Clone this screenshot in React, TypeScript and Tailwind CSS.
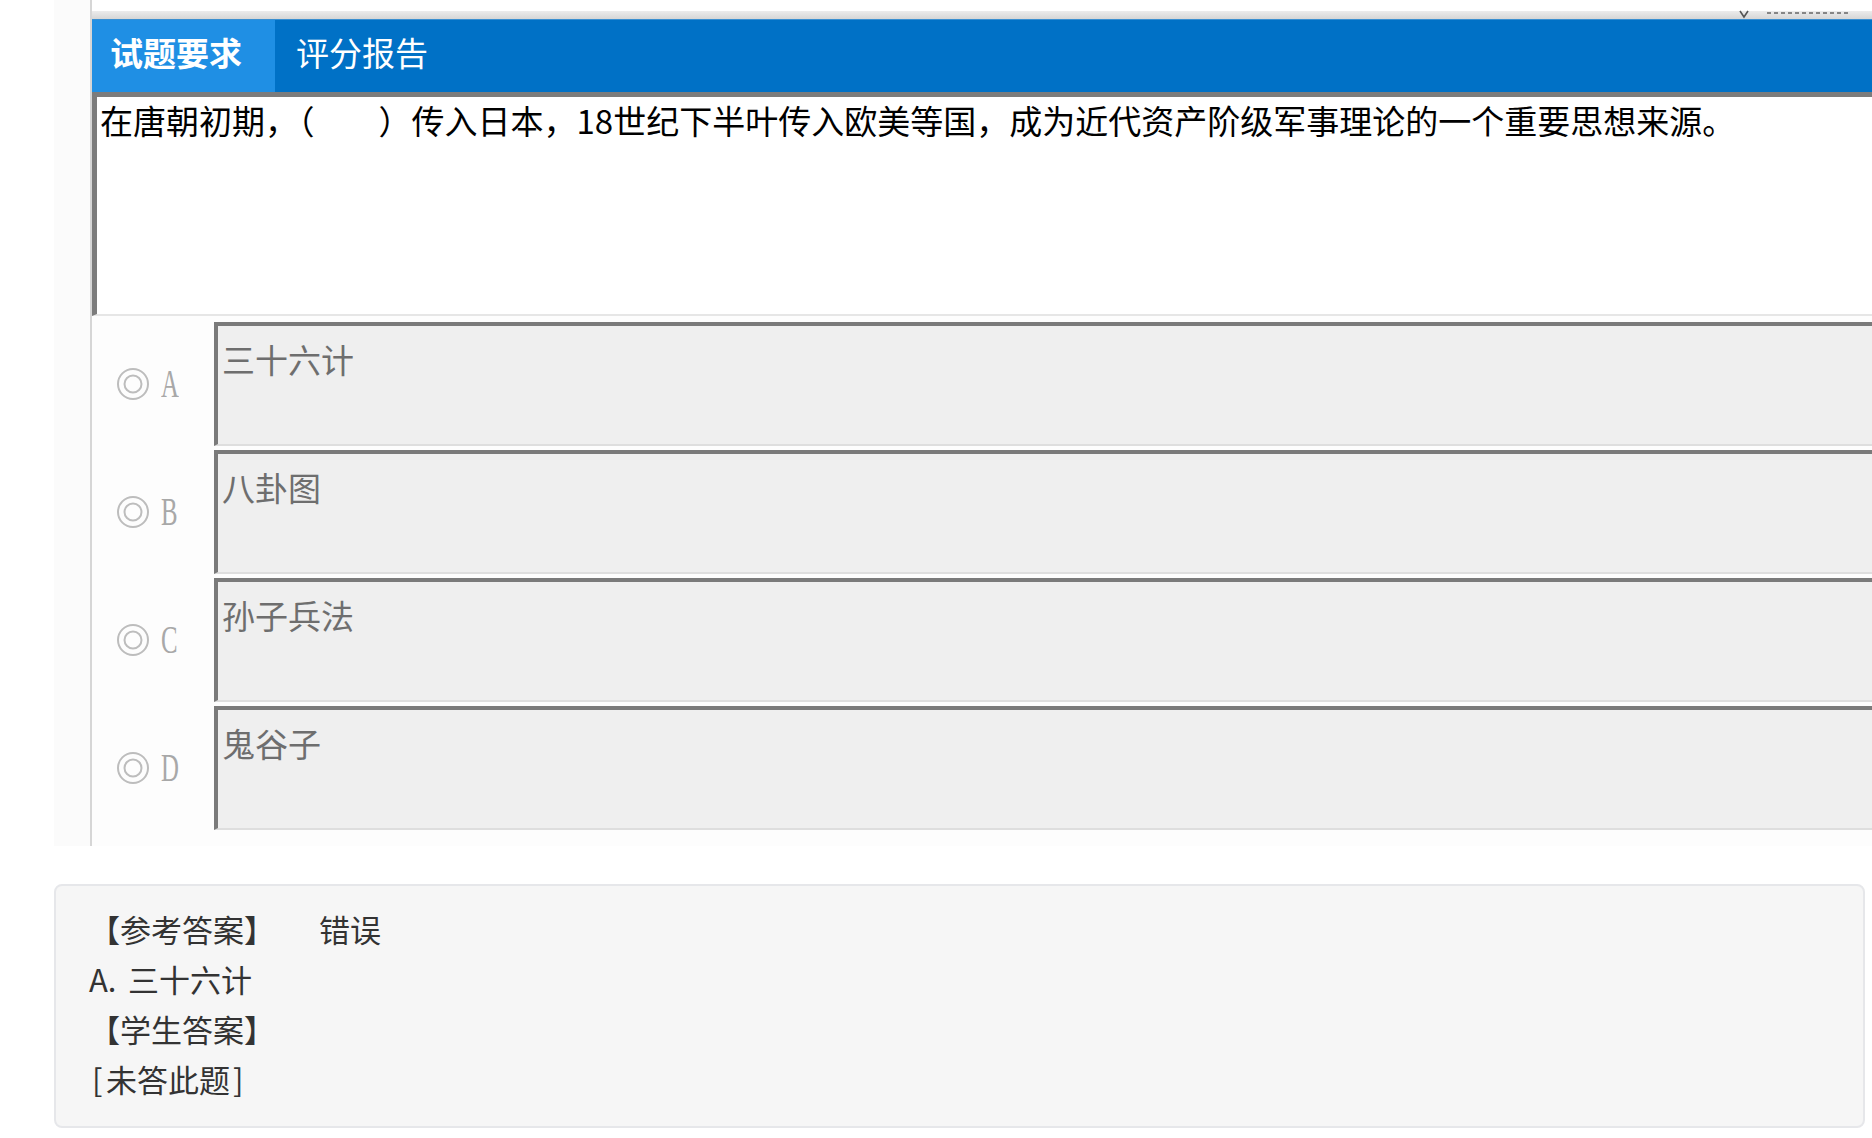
import React from "react";

function Radio() {
  return (
    <svg width="34" height="34" viewBox="0 0 34 34" className="shrink-0">
      <circle cx="17" cy="17" r="15" fill="none" stroke="#bdbdbd" strokeWidth="2" />
      <circle cx="17" cy="17" r="8.5" fill="none" stroke="#bdbdbd" strokeWidth="2" />
    </svg>
  );
}

const options = [
  { k: "A", t: "三十六计" },
  { k: "B", t: "八卦图" },
  { k: "C", t: "孙子兵法" },
  { k: "D", t: "鬼谷子" },
];

export default function App() {
  return (
    <div className="w-[1872px] h-[1138px] bg-white overflow-hidden font-['Noto_Sans_CJK_SC',sans-serif]">
      <div className="ml-[54px] h-[846px] bg-[#fbfbfb] pl-[36px] flex">
        <div className="flex-1 flex flex-col border-l-2 border-[#d6d6d6] bg-[#fdfdfd]">
          <div className="h-[11px] bg-white" />
          <div className="h-[8px] bg-gradient-to-b from-[#ececec] to-[#d6d6d6] relative">
            <svg
              className="absolute left-[1646px] top-[-2px]"
              width="120"
              height="10"
              viewBox="0 0 120 10"
            >
              <path d="M2 2 L6 8 L10 2" fill="none" stroke="#555" strokeWidth="1.6" />
              <path d="M29 4 H112" stroke="#666" strokeWidth="1.6" strokeDasharray="4 3" />
            </svg>
          </div>
          <div className="h-[73px] bg-[#0071c6] border-t border-[#3a8fd0] flex items-stretch">
            <div className="w-[183px] bg-[#1f8fe4] flex items-center pl-[18px] pb-[7px] text-[33px] font-bold text-white">
              试题要求
            </div>
            <div className="flex items-center pl-[21px] pb-[7px] text-[33px] text-white">
              评分报告
            </div>
          </div>
          <div className="h-[224px] border-t-[5px] border-l-[5px] border-[#7c7c7c] border-b-2 border-b-[#e6e6e6] bg-white pl-[3px] pt-[2px]">
            <div className="text-[33px] leading-[42px] text-black whitespace-nowrap">
              在唐朝初期，（<span className="inline-block w-[64px]" />）传入日本，18世纪下半叶传入欧美等国，成为近代资产阶级军事理论的一个重要思想来源。
            </div>
          </div>
          <div className="flex flex-col gap-[4px] pt-[6px]">
            {options.map((o) => (
              <div key={o.k} className="flex h-[124px]">
                <div className="w-[122px] flex items-center pl-[24px]">
                  <Radio />
                  <span className="ml-[11px] inline-block w-[24px] text-[40px] leading-none font-['Liberation_Serif',serif] text-[#a8a8a8] scale-x-[0.62] origin-left">
                    {o.k}
                  </span>
                </div>
                <div className="flex-1 bg-[#efefef] border-t-4 border-l-4 border-[#7a7a7a] border-b-2 border-b-[#dedede] pl-[4px] pt-[12px]">
                  <div className="text-[33px] leading-[42px] text-[#6e6e6e]">{o.t}</div>
                </div>
              </div>
            ))}
          </div>
        </div>
      </div>
      <div className="mt-[38px] ml-[54px] w-[1811px] h-[244px] rounded-[8px] border-2 border-[#e6e7ea] bg-[#f6f6f6] pl-[33px] pt-[18px] text-[31px] leading-[50px] text-[#333]">
        <div>
          【参考答案】<span className="ml-[44px]">错误</span>
        </div>
        <div>
          <span className="inline-block w-[39px]">A.</span>三十六计
        </div>
        <div>【学生答案】</div>
        <div>
          <span className="inline-block w-[17px] pl-[3px]">[</span>未答此题<span className="inline-block w-[17px] pl-[3px]">]</span>
        </div>
      </div>
    </div>
  );
}
